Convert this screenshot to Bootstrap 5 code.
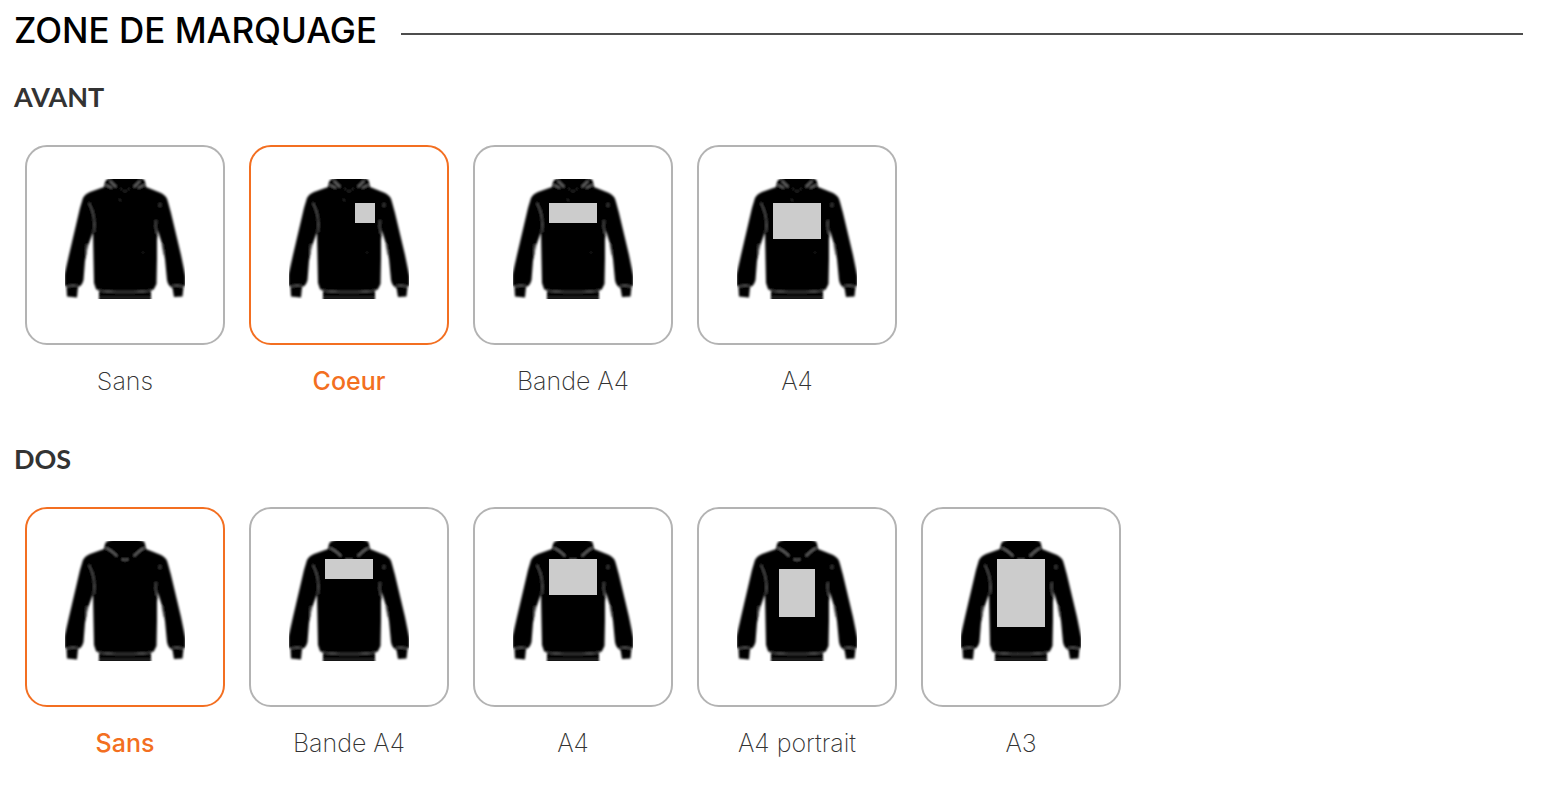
<!DOCTYPE html>
<html lang="fr">
<head>
<meta charset="utf-8">
<meta name="viewport" content="width=device-width, initial-scale=1">
<title>Zone de marquage</title>
<link href="https://cdn.jsdelivr.net/npm/bootstrap@5.3.0/dist/css/bootstrap.min.css" rel="stylesheet">
<style>
  body { font-family: Inter, "Liberation Sans", sans-serif; color: #333; background: #fff; }
  .zone-form { padding: 8px 32px 24px 14px; }
  .zone-head { margin-bottom: 25px; }
  .zone-title { font-size: 35px; line-height: 44px; font-weight: 500; color: #000; }
  .zone-rule { height: 2px; background: #4d4d4d; opacity: 1; border: 0; margin: 7px 0 0; }
  .zone-side { font-family: Lato, sans-serif; font-size: 27px; line-height: 40px; font-weight: 700; margin-bottom: 28px; }
  .zone-group { margin-bottom: 41px; }
  .zone-options { gap: 24px; padding-left: 11px; }
  .zone-option { width: 200px; cursor: pointer; }
  .zone-frame { height: 200px; padding-top: 32px; border: 2px solid #b3b3b3; border-radius: 22px; }
  .zone-label { margin-top: 20px; font-size: 25px; line-height: 33px; font-weight: 200; }
  .btn-check:checked + .zone-option .zone-frame { border-color: #f36f21; }
  .btn-check:checked + .zone-option .zone-label { color: #f36f21; font-weight: 500; }
  .btn-check:focus-visible + .zone-option .zone-frame { box-shadow: 0 0 0 4px #fbd4bc; }
</style>
</head>
<body>
<svg class="position-absolute" width="0" height="0" aria-hidden="true">
  <defs>
    <filter id="soft" filterUnits="userSpaceOnUse" x="-4" y="-4" width="128" height="128"><feGaussianBlur stdDeviation=".8"/></filter>
    <g id="garment">
      <path d="M40 3Q41 0 46-1L50-3H71L75-1Q80 0 80 3L81 8 96 14Q102 17 103 23L106 34 116 76 120.500 98 120.500 106 118.500 108 117.500 117.500 109 118 107.500 109Q103 107 102 101L100 80 97 65 93 52 92 61 92 80 91.500 105 89 110 86 112V123H34V112L31 110 29 104 28.500 80 28 53 23 67 20 82 18.500 101Q17 107 13 108L12 118.500 2 117.500 1.500 108-.5 106-.5 96 4 76 15 29 18 19Q20 15 25 13L39 8Z"/>
      <path fill="none" stroke="#666" stroke-width="1.200" d="M2 107.500Q7 106 13 107M107 107Q113 106 118 107.500M33 111.500Q43 113 60 113T87 111.500"/>
      <path fill="none" stroke="#606060" stroke-width="1.200" d="M24 24Q31 37 29 53M95 24V28M91 41Q90 48 92 55M22 65 21 76M97 65 99 76"/>
      <path fill="none" stroke="#444" stroke-width=".8" d="M35 118.500H85"/>
    </g>
    <symbol id="hoodie-front" viewBox="0 0 120 120">
      <g filter="url(#soft)">
        <use href="#garment"/>
        <path fill="none" stroke="#888" stroke-width="1.200" d="M41 6 47 9M79 6 73 9M45 2 51 8M75 2 69 8"/>
        <path fill="none" stroke="#3c3c3c" stroke-width="1" d="M55 9 60 13 65 9M54 20 56 22M77 73 79 74"/>
      </g>
    </symbol>
    <symbol id="hoodie-back" viewBox="0 0 120 120">
      <g filter="url(#soft)">
        <use href="#garment"/>
        <path fill="none" stroke="#888" stroke-width="1.200" d="M41 7Q46 9 52 15M79 7Q75 9 69 15M57 18Q60 20 63 18"/>
      </g>
    </symbol>
  </defs>
</svg>

<form class="zone-form">
  <div class="zone-head d-flex align-items-center gap-4">
    <h1 class="zone-title m-0">ZONE DE MARQUAGE</h1>
    <hr class="zone-rule flex-grow-1">
  </div>

  <fieldset class="zone-group">
    <legend class="zone-side">AVANT</legend>
    <div class="zone-options d-flex flex-wrap">
      <div><input class="btn-check" type="radio" name="avant" id="av-sans">
        <label class="zone-option d-block text-center" for="av-sans">
          <span class="zone-frame d-block"><svg width="120" height="120" aria-hidden="true"><use href="#hoodie-front"/></svg></span>
          <span class="zone-label d-block">Sans</span></label></div>
      <div><input class="btn-check" type="radio" name="avant" id="av-coeur" checked>
        <label class="zone-option d-block text-center" for="av-coeur">
          <span class="zone-frame d-block"><svg width="120" height="120" aria-hidden="true"><use href="#hoodie-front"/><rect x="66" y="24" width="20" height="20" fill="#ccc"/></svg></span>
          <span class="zone-label d-block">Coeur</span></label></div>
      <div><input class="btn-check" type="radio" name="avant" id="av-bande">
        <label class="zone-option d-block text-center" for="av-bande">
          <span class="zone-frame d-block"><svg width="120" height="120" aria-hidden="true"><use href="#hoodie-front"/><rect x="36" y="24" width="48" height="20" fill="#ccc"/></svg></span>
          <span class="zone-label d-block">Bande A4</span></label></div>
      <div><input class="btn-check" type="radio" name="avant" id="av-a4">
        <label class="zone-option d-block text-center" for="av-a4">
          <span class="zone-frame d-block"><svg width="120" height="120" aria-hidden="true"><use href="#hoodie-front"/><rect x="36" y="24" width="48" height="36" fill="#ccc"/></svg></span>
          <span class="zone-label d-block">A4</span></label></div>
    </div>
  </fieldset>

  <fieldset>
    <legend class="zone-side">DOS</legend>
    <div class="zone-options d-flex flex-wrap">
      <div><input class="btn-check" type="radio" name="dos" id="dos-sans" checked>
        <label class="zone-option d-block text-center" for="dos-sans">
          <span class="zone-frame d-block"><svg width="120" height="120" aria-hidden="true"><use href="#hoodie-back"/></svg></span>
          <span class="zone-label d-block">Sans</span></label></div>
      <div><input class="btn-check" type="radio" name="dos" id="dos-bande">
        <label class="zone-option d-block text-center" for="dos-bande">
          <span class="zone-frame d-block"><svg width="120" height="120" aria-hidden="true"><use href="#hoodie-back"/><rect x="36" y="18" width="48" height="20" fill="#ccc"/></svg></span>
          <span class="zone-label d-block">Bande A4</span></label></div>
      <div><input class="btn-check" type="radio" name="dos" id="dos-a4">
        <label class="zone-option d-block text-center" for="dos-a4">
          <span class="zone-frame d-block"><svg width="120" height="120" aria-hidden="true"><use href="#hoodie-back"/><rect x="36" y="18" width="48" height="36" fill="#ccc"/></svg></span>
          <span class="zone-label d-block">A4</span></label></div>
      <div><input class="btn-check" type="radio" name="dos" id="dos-portrait">
        <label class="zone-option d-block text-center" for="dos-portrait">
          <span class="zone-frame d-block"><svg width="120" height="120" aria-hidden="true"><use href="#hoodie-back"/><rect x="42" y="28" width="36" height="48" fill="#ccc"/></svg></span>
          <span class="zone-label d-block">A4 portrait</span></label></div>
      <div><input class="btn-check" type="radio" name="dos" id="dos-a3">
        <label class="zone-option d-block text-center" for="dos-a3">
          <span class="zone-frame d-block"><svg width="120" height="120" aria-hidden="true"><use href="#hoodie-back"/><rect x="36" y="18" width="48" height="68" fill="#ccc"/></svg></span>
          <span class="zone-label d-block">A3</span></label></div>
    </div>
  </fieldset>
</form>
<script src="https://cdn.jsdelivr.net/npm/bootstrap@5.3.0/dist/js/bootstrap.bundle.min.js"></script>
</body>
</html>
